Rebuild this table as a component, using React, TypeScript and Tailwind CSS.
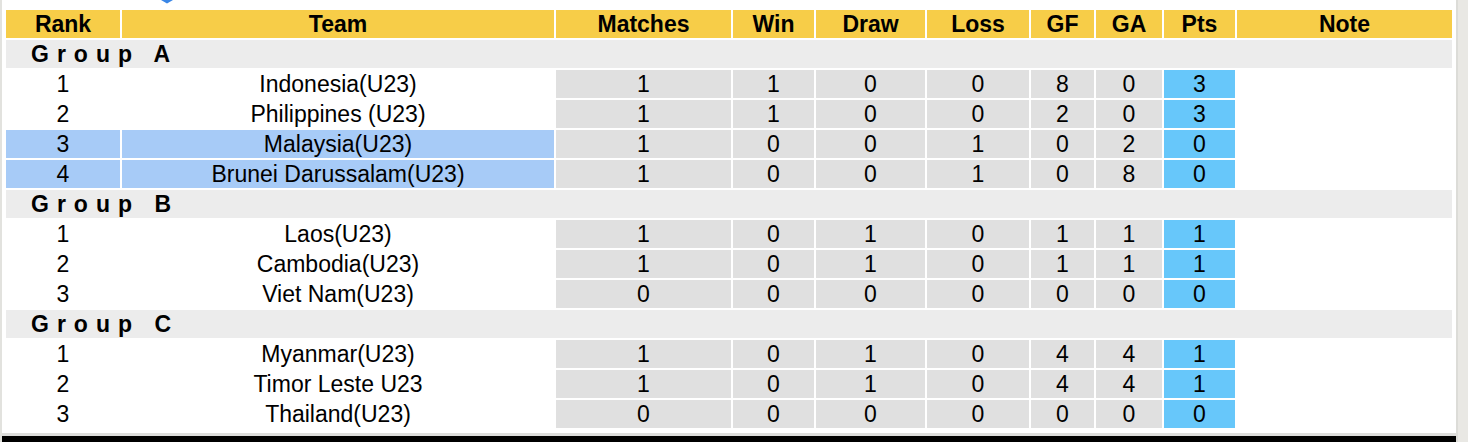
import React from "react"

interface TeamRow {
  rank: number
  team: string
  matches: number
  win: number
  draw: number
  loss: number
  gf: number
  ga: number
  pts: number
  highlight?: boolean
}

interface Group {
  name: string
  rows: TeamRow[]
}

const groups: Group[] = [
  {
    name: "Group A",
    rows: [
      { rank: 1, team: "Indonesia(U23)", matches: 1, win: 1, draw: 0, loss: 0, gf: 8, ga: 0, pts: 3 },
      { rank: 2, team: "Philippines (U23)", matches: 1, win: 1, draw: 0, loss: 0, gf: 2, ga: 0, pts: 3 },
      { rank: 3, team: "Malaysia(U23)", matches: 1, win: 0, draw: 0, loss: 1, gf: 0, ga: 2, pts: 0, highlight: true },
      { rank: 4, team: "Brunei Darussalam(U23)", matches: 1, win: 0, draw: 0, loss: 1, gf: 0, ga: 8, pts: 0, highlight: true },
    ],
  },
  {
    name: "Group B",
    rows: [
      { rank: 1, team: "Laos(U23)", matches: 1, win: 0, draw: 1, loss: 0, gf: 1, ga: 1, pts: 1 },
      { rank: 2, team: "Cambodia(U23)", matches: 1, win: 0, draw: 1, loss: 0, gf: 1, ga: 1, pts: 1 },
      { rank: 3, team: "Viet Nam(U23)", matches: 0, win: 0, draw: 0, loss: 0, gf: 0, ga: 0, pts: 0 },
    ],
  },
  {
    name: "Group C",
    rows: [
      { rank: 1, team: "Myanmar(U23)", matches: 1, win: 0, draw: 1, loss: 0, gf: 4, ga: 4, pts: 1 },
      { rank: 2, team: "Timor Leste U23", matches: 1, win: 0, draw: 1, loss: 0, gf: 4, ga: 4, pts: 1 },
      { rank: 3, team: "Thailand(U23)", matches: 0, win: 0, draw: 0, loss: 0, gf: 0, ga: 0, pts: 0 },
    ],
  },
]

// header label + column width
const columns: [string, string][] = [
  ["Rank", "w-[114px]"],
  ["Team", "w-[432px]"],
  ["Matches", "w-[175px]"],
  ["Win", "w-[81px]"],
  ["Draw", "w-[109px]"],
  ["Loss", "w-[102px]"],
  ["GF", "w-[63px]"],
  ["GA", "w-[66px]"],
  ["Pts", "w-[71px]"],
  ["Note", "w-[215px]"],
]

export default function App() {
  return (
    <div
      className="flex h-[442px] w-[1468px] bg-white text-black"
      style={{ fontFamily: '"Liberation Sans", Arial, sans-serif' }}
    >
      <div className="w-[2px] bg-[#e2e2de]" />

      <div className="flex flex-1 flex-col">
        {/* top strip with the cut-off marker */}
        <div className="h-[8px] pl-[158px]">
          <svg width="14" height="4" viewBox="0 0 14 4" className="block">
            <polygon points="1,0 13,0 7,3.5" fill="#3a86e6" />
          </svg>
        </div>

        <div className="px-[2px]">
          <table className="w-[1450px] table-fixed border-separate border-spacing-[2px] text-[23px] leading-[28px]">
            <thead>
              <tr>
                {columns.map(([h, w]) => (
                  <th key={h} className={`${w} h-[28px] bg-[#f7cd48] p-0 text-center font-bold`}>
                    {h}
                  </th>
                ))}
              </tr>
            </thead>
            <tbody>
              {groups.map((g) => (
                <React.Fragment key={g.name}>
                  <tr>
                    <td colSpan={10} className="h-[28px] bg-[#ececec] p-0 pl-[25px] font-bold tracking-[8px]">
                      {g.name}
                    </td>
                  </tr>
                  {g.rows.map((r) => (
                    <tr key={r.team}>
                      <td className={`h-[28px] p-0 text-center ${r.highlight ? "bg-[#a7cbf7]" : ""}`}>{r.rank}</td>
                      <td className={`p-0 text-center ${r.highlight ? "bg-[#a7cbf7]" : ""}`}>{r.team}</td>
                      <td className="bg-[#e0e0e0] p-0 text-center">{r.matches}</td>
                      <td className="bg-[#e0e0e0] p-0 text-center">{r.win}</td>
                      <td className="bg-[#e0e0e0] p-0 text-center">{r.draw}</td>
                      <td className="bg-[#e0e0e0] p-0 text-center">{r.loss}</td>
                      <td className="bg-[#e0e0e0] p-0 text-center">{r.gf}</td>
                      <td className="bg-[#e0e0e0] p-0 text-center">{r.ga}</td>
                      <td className="bg-[#67c7fa] p-0 text-center">{r.pts}</td>
                      <td className="p-0" />
                    </tr>
                  ))}
                </React.Fragment>
              ))}
            </tbody>
          </table>
        </div>

        <div className="h-[3px]" />
        <div className="h-[3px] bg-[#dddddb]" />
        <div className="flex-1 bg-black" />
      </div>

      <div className="w-[12px] border-l-2 border-[#dcdcd8] bg-[#e9e8e4]" />
    </div>
  )
}
